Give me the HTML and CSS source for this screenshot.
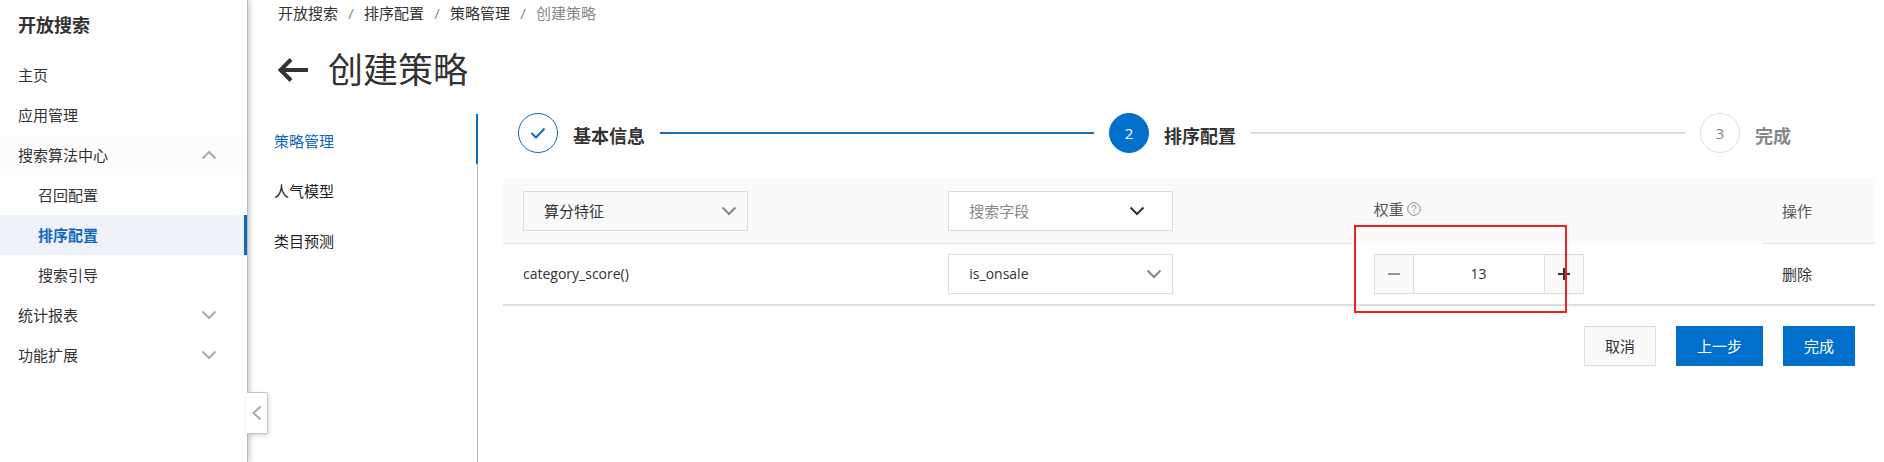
FILE: index.html
```html
<!DOCTYPE html>
<html lang="zh-CN">
<head>
    <meta charset="UTF-8">
    <meta name="viewport" content="width=device-width, initial-scale=1.0">
    <title>创建策略</title>
    <link rel="stylesheet" href="styles.css">
</head>
<body>

    <aside class="sidebar">
        <h2 class="sidebar-title">开放搜索</h2>
        <nav class="menu">
            <a href="#">主页</a>
            <a href="#">应用管理</a>
            <a href="#" class="open">搜索算法中心
                <svg class="chevron" viewBox="0 0 16 16"><path d="M1.500 11.500L8 5l6.500 6.500"/></svg>
            </a>
            <a href="#" class="sub">召回配置</a>
            <a href="#" class="sub active">排序配置</a>
            <a href="#" class="sub">搜索引导</a>
            <a href="#">统计报表
                <svg class="chevron" viewBox="0 0 16 16"><path d="M1.500 4.500L8 11l6.500-6.500"/></svg>
            </a>
            <a href="#">功能扩展
                <svg class="chevron" viewBox="0 0 16 16"><path d="M1.500 4.500L8 11l6.500-6.500"/></svg>
            </a>
        </nav>
        <button type="button" class="collapse" aria-label="收起">
            <svg class="chevron" viewBox="0 0 16 16"><path d="M11.500 1.500L4.500 8l7 6.500"/></svg>
        </button>
    </aside>

    <main class="page">
        <nav class="breadcrumb">
            <a href="#">开放搜索</a>
            <span class="slash">/</span>
            <a href="#">排序配置</a>
            <span class="slash">/</span>
            <a href="#">策略管理</a>
            <span class="slash">/</span>
            <span class="current">创建策略</span>
        </nav>

        <header class="page-header">
            <a href="#" class="back" aria-label="返回">
                <svg viewBox="0 0 30 24"><path d="M30 12H2M13 1.500L2.500 12L13 22.500"/></svg>
            </a>
            <h1>创建策略</h1>
        </header>

        <div class="body">
            <nav class="tabs">
                <a href="#" class="active">策略管理</a>
                <a href="#">人气模型</a>
                <a href="#">类目预测</a>
            </nav>

            <section class="content">
                <ol class="steps">
                    <li class="step done">
                        <span class="circle">
                            <svg viewBox="0 0 16 12"><path d="M1.500 6l4.500 4.500L14.500 1.500"/></svg>
                        </span>
                        <span class="label">基本信息</span>
                    </li>
                    <li class="step current">
                        <span class="circle">2</span>
                        <span class="label">排序配置</span>
                    </li>
                    <li class="step">
                        <span class="circle">3</span>
                        <span class="label">完成</span>
                    </li>
                </ol>

                <form>
                    <table class="rules">
                        <thead>
                            <tr>
                                <th class="col-field">
                                    <div class="select gray">
                                        <select aria-label="算分特征"><option>算分特征</option></select>
                                        <svg class="chevron" viewBox="0 0 16 16"><path d="M1.500 4.500L8 11l6.500-6.500"/></svg>
                                    </div>
                                </th>
                                <th class="col-field">
                                    <div class="select filter">
                                        <select aria-label="搜索字段"><option>搜索字段</option></select>
                                        <svg class="chevron" viewBox="0 0 16 16"><path d="M1.500 4.500L8 11l6.500-6.500"/></svg>
                                    </div>
                                </th>
                                <th class="col-weight">
                                    <label for="weight" class="weight-label">权重
                                        <svg viewBox="0 0 14 14"><circle cx="7" cy="7" r="6.300"/><path d="M5 5.600a2 2 0 1 1 3 1.700c-.7.400-1 .7-1 1.400M7 9.900v1.200"/></svg>
                                    </label>
                                </th>
                                <th class="col-action">操作</th>
                            </tr>
                        </thead>
                        <tbody>
                            <tr>
                                <td>category_score()</td>
                                <td>
                                    <div class="select">
                                        <select aria-label="字段"><option>is_onsale</option></select>
                                        <svg class="chevron" viewBox="0 0 16 16"><path d="M1.500 4.500L8 11l6.500-6.500"/></svg>
                                    </div>
                                </td>
                                <td class="weight">
                                    <div class="number">
                                        <button type="button" class="minus" aria-label="减少"><svg viewBox="0 0 14 14"><path d="M1 7h12"/></svg></button>
                                        <input type="text" id="weight" value="13">
                                        <button type="button" class="plus" aria-label="增加"><svg viewBox="0 0 14 14"><path d="M1 7h12M7 1v12"/></svg></button>
                                    </div>
                                    <span class="highlight"></span>
                                </td>
                                <td><a href="#" class="delete">删除</a></td>
                            </tr>
                        </tbody>
                    </table>

                    <div class="actions">
                        <button type="button" class="btn">取消</button>
                        <button type="button" class="btn primary">上一步</button>
                        <button type="submit" class="btn primary">完成</button>
                    </div>
                </form>
            </section>
        </div>
    </main>

</body>
</html>
```

FILE: styles.css
```css
* {
    margin: 0;
    padding: 0;
    box-sizing: border-box;
}
body {
    display: flex;
    min-height: 100vh;
    background: #fff;
    color: #333;
    font-family: "Open Sans", "Noto Sans CJK SC", sans-serif;
    font-size: 15px;
    line-height: 20px;
}
a {
    color: inherit;
    text-decoration: none;
}
button, input, select {
    font: inherit;
    color: inherit;
    border-radius: 0;
}
button {
    cursor: pointer;
}
svg {
    display: block;
    fill: none;
    stroke: currentColor;
    flex-shrink: 0;
}
.chevron {
    width: 16px;
    height: 16px;
    stroke-width: 2;
    color: #aaa;
}

/* sidebar */
.sidebar {
    position: relative;
    width: 248px;
    flex-shrink: 0;
    border-right: 1px solid #bbb;
    box-shadow: 2px 0 5px rgba(0, 0, 0, 0.2);
}
.sidebar-title {
    padding: 15px 18px;
    font-size: 18px;
    line-height: 20px;
    height: 55px;
}
.menu a {
    display: flex;
    align-items: center;
    justify-content: space-between;
    height: 40px;
    padding: 0 30px 0 18px;
}
.menu .open {
    background: #fcfcfc;
}
.menu .sub {
    padding-left: 38px;
}
.menu .active {
    background: #eef2f8;
    border-right: 3px solid #0f6ab8;
    color: #0f66c0;
    font-weight: bold;
}
.collapse {
    position: absolute;
    left: 100%;
    top: 392px;
    width: 21px;
    height: 42px;
    display: flex;
    align-items: center;
    justify-content: center;
    background: #fff;
    border: 1px solid #c4c4c4;
    border-left: none;
    border-radius: 0 2px 2px 0;
    box-shadow: 1px 2px 4px rgba(0, 0, 0, 0.15);
}

/* page head */
.page {
    flex: 1;
    min-width: 0;
    display: flex;
    flex-direction: column;
    padding: 3px 9px 0 26px;
}
.breadcrumb {
    display: flex;
    padding-left: 4px;
}
.slash {
    width: 26px;
    text-align: center;
    color: #888;
}
.breadcrumb .current {
    color: #888;
}
.page-header {
    display: flex;
    align-items: center;
    gap: 20px;
    padding: 27px 4px 24px;
}
.back svg {
    width: 30px;
    height: 24px;
    stroke-width: 4;
}
h1 {
    font-size: 35px;
    line-height: 40px;
    font-weight: normal;
}

.body {
    flex: 1;
    display: flex;
}
.tabs {
    width: 204px;
    flex-shrink: 0;
    border-right: 1px solid #bbb;
}
.tabs a {
    display: block;
    height: 50px;
    padding-top: 17px;
    margin-right: -1px;
    color: #222;
}
.tabs .active {
    color: #0f66c0;
    border-right: 2px solid #0f6ab8;
}
.content {
    flex: 1;
    min-width: 0;
    padding-left: 25px;
}

/* steps */
.steps {
    display: flex;
    list-style: none;
    padding: 0 84px 0 15px;
    height: 64px;
}
.step {
    display: flex;
    align-items: center;
    gap: 15px;
    height: 38px;
    color: #888;
}
.step:not(:last-child) {
    flex: 1;
    margin-right: 15px;
}
.step:last-child {
    flex-shrink: 0;
}
.step:not(:last-child)::after {
    content: "";
    flex: 1;
    height: 2px;
    background: #ddd;
}
.circle {
    display: flex;
    align-items: center;
    justify-content: center;
    width: 40px;
    height: 40px;
    border: 1px solid #ddd;
    border-radius: 50%;
}
.label {
    padding-top: 6px;
    font-size: 18px;
    font-weight: bold;
}
.done .label, .steps .current .label {
    color: #333;
}
.done .circle {
    border-color: #0f6ab8;
    color: #0f6ab8;
}
.done .circle svg {
    width: 16px;
    height: 12px;
    stroke-width: 2;
}
.step.done::after {
    background: #1a6cb3;
}
.steps .current .circle {
    background: #0070cc;
    border-color: #0070cc;
    color: #fff;
}

/* table */
.rules {
    width: 100%;
    table-layout: fixed;
    border-collapse: separate;
    border-spacing: 0;
}
.rules th, .rules td {
    padding: 0 20px;
    text-align: left;
    vertical-align: middle;
    font-weight: normal;
}
.rules th {
    height: 66px;
    background: #fafafa;
    border-bottom: 1px solid #e4e4e4;
    color: #555;
}
.rules td {
    height: 62px;
    border-bottom: 2px solid #ddd;
    font-size: 14px;
}
.rules .delete {
    font-size: 15px;
}
.rules .col-field {
    width: 31%;
}
.rules .col-weight {
    border-bottom-color: #fff;
}
.rules .col-action {
    width: 113px;
}
.select {
    display: flex;
    align-items: center;
    width: 225px;
    max-width: 100%;
    height: 40px;
    padding-right: 10px;
    background: #fff;
    border: 1px solid #ddd;
}
.select select {
    flex: 1;
    min-width: 0;
    height: 38px;
    padding-left: 20px;
    background: none;
    border: none;
    outline: none;
    appearance: none;
    color: #333;
}
.select .chevron {
    color: #888;
}
.gray {
    background: #fafafa;
}
.filter {
    padding-right: 27px;
}
.filter select {
    color: #888;
}
.filter .chevron {
    color: #333;
}
.weight-label {
    display: flex;
    align-items: center;
    gap: 3px;
    padding-bottom: 4px;
}
.weight-label svg {
    width: 14px;
    height: 14px;
    color: #888;
}
.weight {
    position: relative;
}
.number {
    display: flex;
    width: 210px;
    height: 40px;
    border: 1px solid #ddd;
}
.number button {
    display: flex;
    align-items: center;
    justify-content: center;
    width: 39px;
    background: #fafafa;
    border: none;
}
.number svg {
    width: 14px;
    height: 14px;
}
.number .minus {
    border-right: 1px solid #ddd;
    color: #333;
}
.number .plus {
    border-left: 1px solid #ddd;
    stroke-width: 2;
}
.number input {
    flex: 1;
    min-width: 0;
    border: none;
    outline: none;
    text-align: center;
}
.highlight {
    position: absolute;
    left: 0;
    top: -19px;
    width: 213px;
    height: 88px;
    border: 2px solid #f02020;
    pointer-events: none;
}

/* buttons */
.actions {
    display: flex;
    justify-content: flex-end;
    gap: 20px;
    padding: 20px;
}
.btn {
    min-width: 72px;
    height: 40px;
    padding: 0 20px;
    background: #fafafa;
    border: 1px solid #ddd;
}
.primary {
    background: #0070cc;
    border-color: #0070cc;
    color: #fff;
}
```
